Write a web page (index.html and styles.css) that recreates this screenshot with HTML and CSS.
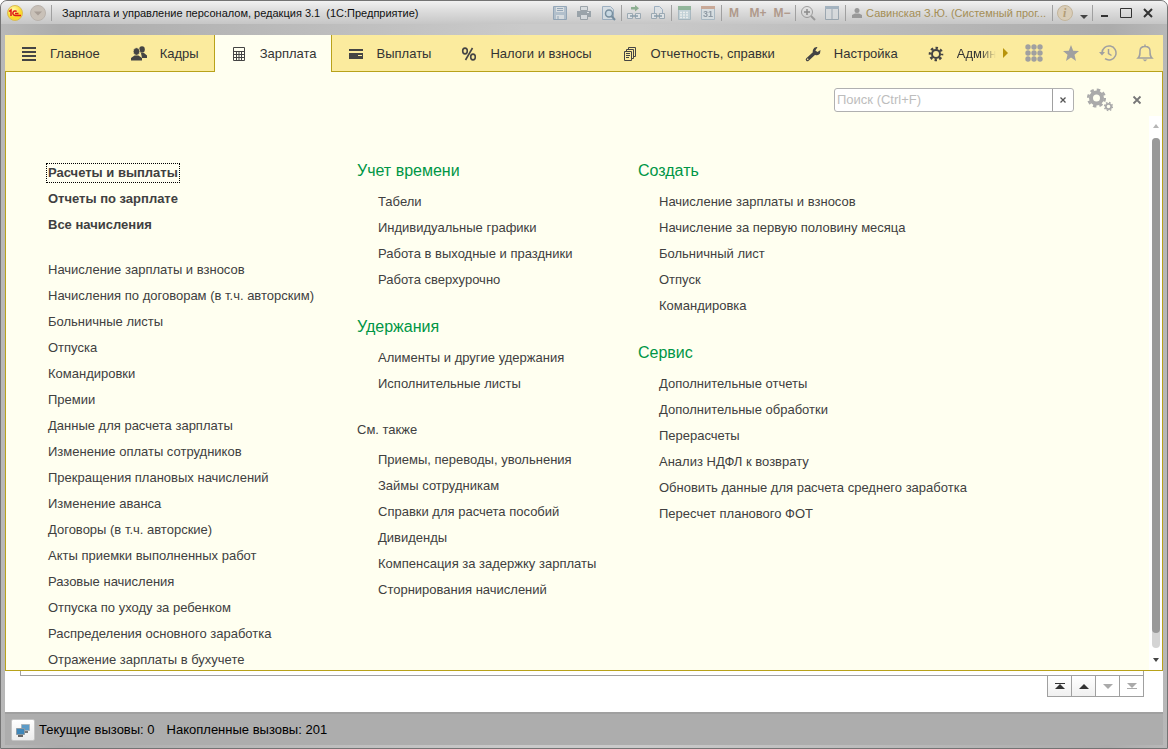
FILE: index.html
```html
<!DOCTYPE html>
<html lang="ru">
<head>
<meta charset="utf-8">
<title>Зарплата и управление персоналом</title>
<link rel="stylesheet" href="styles.css">
</head>
<body>
<div class="window">
  <header class="titlebar">
    <svg class="logo" viewBox="0 0 16 16"><defs><radialGradient id="g1" cx=".4" cy=".3"><stop offset="0" stop-color="#fffbb0"/><stop offset="1" stop-color="#fbd92a"/></radialGradient></defs><circle cx="8" cy="8" r="7.5" fill="url(#g1)" stroke="#d8ba58"/><path d="M2 6.5L4 5v6M9.700 6.500A2.300 2.300 0 1 0 8 10.500H14M8 8.500h3.500" fill="none" stroke="#e01818" stroke-width="1.500"/></svg>
    <button class="round" aria-label="Меню"><svg viewBox="0 0 16 16"><circle cx="8" cy="8" r="7.500" fill="#c9c1b8" stroke="#b9b2ac"/><path d="M4 6.500h8L8 10.500z" fill="#a89e96"/></svg></button>
    <i class="sep first"></i>
    <h1 class="title">Зарплата и управление персоналом, редакция 3.1&nbsp; (1С:Предприятие)</h1>
    <div class="tools">
      <button aria-label="Сохранить"><svg viewBox="0 0 16 16"><path d="M1.500 1.500h13v13h-13z" fill="#a9bac9" stroke="#8299ae"/><path d="M4 2h8v5H4zM4 10h8v4H4z" fill="#d8dee2"/><path d="M5 3.500h6M5 5.500h6M6 11v3" stroke="#8299ae"/></svg></button>
      <button aria-label="Печать"><svg viewBox="0 0 16 16"><path d="M4.500 1.500h7v4h-7z" fill="#d7dcdf" stroke="#8b959d"/><path d="M1 6h14v6H1z" fill="#8b979f"/><path d="M4.500 9.500h7v5h-7z" fill="#d7dcdf" stroke="#8b959d"/><path d="M11 7.500h2" stroke="#e0e5e8"/></svg></button>
      <button aria-label="Предварительный просмотр"><svg viewBox="0 0 16 16"><path d="M2.500 1.500h8l3 3v10h-11z" fill="#d3dde4" stroke="#8ca3b8"/><circle cx="9" cy="8.500" r="3.500" fill="#c4d8e5" stroke="#607d92" stroke-width="1.500"/><path d="M11.500 11l3.500 4" stroke="#607d92" stroke-width="2"/></svg></button>
      <i class="sep"></i>
      <button aria-label="Получить ссылку"><svg viewBox="0 0 16 16"><path d="M5 2h4V0l4 3.200L9 6.500V4.500H5z" fill="#78a27e"/><path d="M6.500 8.500h-5v5h5zM9.500 8.500h5v5h-5z" fill="#e0e5e9" stroke="#8e9fab"/><path d="M4 11h8" stroke="#7990a0" stroke-width="1.500"/></svg></button>
      <button aria-label="Перейти по ссылке"><svg viewBox="0 0 16 16"><path d="M4.500 8V1.500h5l3 3V8" fill="#dce1e5" stroke="#8ca3b8"/><path d="M6.500 8.500h-5v5h5zM9.500 8.500h5v5h-5z" fill="#e0e5e9" stroke="#8e9fab"/><path d="M4 11h8" stroke="#7990a0" stroke-width="1.500"/></svg></button>
      <i class="sep"></i>
      <button aria-label="Калькулятор"><svg viewBox="0 0 16 16"><path d="M2.500 1.500h12v13h-12z" fill="#bdd0d7" stroke="#9db0ba"/><path d="M2 1h13v4H2z" fill="#7eab89"/><path d="M4 7.500h9M4 10h9M4 12.500h9" stroke="#eef2f2" stroke-width="1.500" stroke-dasharray="2 1"/></svg></button>
      <button aria-label="Календарь"><svg viewBox="0 0 16 16"><path d="M1.500 1.500h13v13h-13z" fill="#d6dfe3" stroke="#9fb2bf"/><path d="M1 1h14v3H1z" fill="#c39b85"/><text x="3" y="12" class="day">31</text></svg></button>
      <i class="sep"></i>
      <button class="mem">M</button><button class="mem">M+</button><button class="mem">M−</button>
      <i class="sep"></i>
      <button aria-label="Масштаб"><svg viewBox="0 0 16 16" fill="none" stroke="#8c8c8c"><circle cx="7" cy="7" r="5.500"/><path d="M4 7h6M7 4v6" stroke="#777" stroke-width="1.500"/><path d="M11 11l4 4" stroke-width="2"/></svg></button>
      <button aria-label="Панели"><svg viewBox="0 0 16 16"><path d="M1.500 1.500h13v13h-13zM8 3v11" fill="#d6dadd" stroke="#8d9ba7"/><path d="M1 1h14v3H1z" fill="#94a7b7"/></svg></button>
      <i class="sep"></i>
    </div>
    <a class="user" href="#"><svg viewBox="0 0 12 12"><circle cx="6" cy="3.500" r="2.500" fill="#999"/><path d="M1 11V8l3-1.500h4L11 8v3z" fill="#999"/></svg><span>Савинская З.Ю. (Системный прог...</span></a>
    <i class="sep"></i>
    <div class="controls">
      <button aria-label="Справка"><svg viewBox="0 0 18 18"><circle cx="9" cy="9" r="7.500" fill="#d9cdb8" stroke="#c3b59b"/><text x="7" y="13" class="info">i</text></svg></button>
      <button class="drop" aria-label="Ещё"><svg viewBox="0 0 10 16"><path d="M1 10h8l-4 4z" fill="#444"/></svg></button>
      <i class="sep"></i>
      <button aria-label="Свернуть"><svg viewBox="0 0 16 16"><path d="M5 11h7" stroke="#333" stroke-width="2"/></svg></button>
      <button aria-label="Развернуть"><svg viewBox="0 0 16 16"><path d="M2.500 3.500h11v9h-11z" fill="none" stroke="#333"/></svg></button>
      <button aria-label="Закрыть"><svg viewBox="0 0 16 16"><path d="M4 4l8 8M12 4l-8 8" stroke="#333" stroke-width="2"/></svg></button>
    </div>
  </header>

  <nav class="nav">
    <div class="tabs">
      <a href="#"><svg viewBox="0 0 16 16"><path d="M1 2h14M1 6h14M1 10h14M1 14h14" stroke="#444" stroke-width="2"/></svg>Главное</a>
      <a href="#"><svg viewBox="0 0 16 16" fill="#444"><ellipse cx="11" cy="3.500" rx="2.800" ry="3.200"/><path d="M10 7h3l3 2.500V12h-5z"/><ellipse cx="5.500" cy="5.500" rx="3.300" ry="3.800" stroke="#fbeb9e" stroke-width=".7"/><path d="M0 14.500V12l3.500-2.500h4L11 12v2.500z"/></svg>Кадры</a>
      <a href="#" class="active" aria-current="page"><svg viewBox="0 0 16 16"><path d="M2.500 1.500h11v13h-11z" fill="#fffff0" stroke="#444"/><path d="M2 5.500h12M5.500 6v8M8 6v8M10.500 6v8M3 8.500h10M3 11.500h10" fill="none" stroke="#444"/></svg>Зарплата</a>
      <a href="#"><svg viewBox="0 0 16 16"><path d="M1 3h14v2H1zM1 7h14v6H1z" fill="#444"/><path d="M10 9.500h4" stroke="#fbeb9e"/></svg>Выплаты</a>
      <a href="#"><svg viewBox="0 0 16 16" fill="none" stroke="#444" stroke-width="1.600"><ellipse cx="4" cy="5" rx="2.300" ry="2.900"/><ellipse cx="12" cy="11" rx="2.300" ry="2.900"/><path d="M11.500 2L4.500 14"/></svg>Налоги и взносы</a>
      <a href="#"><svg viewBox="0 0 16 16" fill="none" stroke="#444"><path d="M2.500 5.500h7v9h-7zM4.500 5V3.500h7v9H10M6.500 3V1.500h7v9H12M4 7.500h4M4 9.500h4M4 11.500h3"/></svg>Отчетность, справки</a>
      <a href="#"><svg viewBox="0 0 16 16"><path d="M2.500 13.500L9 7.500" stroke="#444" stroke-width="3.500" stroke-linecap="round"/><path d="M12.500 1.200A4 4 0 1 0 15 7.500L15.500 4 12.500 6 10.300 4.500z" fill="#444"/><circle cx="2.700" cy="13.300" r=".8" fill="#fbeb9e"/></svg>Настройка</a>
      <a href="#" class="cut"><svg viewBox="0 0 16 16" fill="none" stroke="#444"><circle cx="8" cy="8" r="4" stroke-width="2"/><circle cx="8" cy="8" r="6" stroke-width="2.600" stroke-dasharray="2.400 2.312" stroke-dashoffset="1.200"/></svg><span>Админ</span></a>
    </div>
    <button class="more" aria-label="Дальше"><svg viewBox="0 0 6 10"><path d="M0 0l5 5-5 5z" fill="#b8940a"/></svg></button>
    <div class="quick">
      <button aria-label="Все функции"><svg viewBox="0 0 18 18" fill="#a0a0a0"><circle cx="3" cy="3" r="2.700"/><circle cx="9" cy="3" r="2.700"/><circle cx="15" cy="3" r="2.700"/><circle cx="3" cy="9" r="2.700"/><circle cx="9" cy="9" r="2.700"/><circle cx="15" cy="9" r="2.700"/><circle cx="3" cy="15" r="2.700"/><circle cx="9" cy="15" r="2.700"/><circle cx="15" cy="15" r="2.700"/></svg></button>
      <button aria-label="Избранное"><svg viewBox="0 0 18 18"><path d="M9 1l2.200 5.700 5.800.3-4.500 3.800L14 17l-5-3.400L4 17l1.500-6.200L1 7l5.800-.3z" fill="#a0a0a0"/></svg></button>
      <button aria-label="История"><svg viewBox="0 0 18 18" fill="none" stroke="#a0a0a0" stroke-width="1.500"><path d="M3 9a7 7 0 1 1 3 5.700M9.500 5v4.500l3 2"/><path d="M0 8h6l-3 3.500z" fill="#a0a0a0" stroke="none"/></svg></button>
      <button aria-label="Уведомления"><svg viewBox="0 0 18 18"><path d="M2 14c2-2 2-3 2-7 0-3 2-4.500 5-4.500S14 4 14 7c0 4 0 5 2 7zM9 .5v2" fill="none" stroke="#a0a0a0" stroke-width="1.500"/><path d="M6.500 15.500h5L9 17.500z" fill="#a0a0a0"/></svg></button>
    </div>
  </nav>

  <main class="panel">
    <div class="search-row">
      <form class="search"><input type="text" placeholder="Поиск (Ctrl+F)" aria-label="Поиск"><button type="button" aria-label="Очистить"><svg viewBox="0 0 8 8"><path d="M1.500 1.500l5 5M6.500 1.500l-5 5" stroke="#555" stroke-width="1.300"/></svg></button></form>
      <button class="gears" aria-label="Настройки"><svg viewBox="0 0 26 24" fill="none" stroke="#aaa"><circle cx="9.500" cy="10" r="5.500" stroke-width="4"/><circle cx="9.500" cy="10" r="8.300" stroke-width="2.500" stroke-dasharray="3.500 3.019"/><circle cx="21.500" cy="18.500" r="2.700" stroke-width="1.800"/><circle cx="21.500" cy="18.500" r="4" stroke-width="1.400" stroke-dasharray="1.600 1.542"/></svg></button>
      <button class="close" aria-label="Закрыть панель"><svg viewBox="0 0 10 10"><path d="M1.500 1.500l7 7M8.500 1.500l-7 7" stroke="#777" stroke-width="1.800"/></svg></button>
    </div>
    <div class="panel-body">
      <div class="columns">
        <section class="col-main">
          <ul class="strong">
            <li><a href="#" class="focused">Расчеты и выплаты</a></li>
            <li><a href="#">Отчеты по зарплате</a></li>
            <li><a href="#">Все начисления</a></li>
          </ul>
          <ul>
            <li><a href="#">Начисление зарплаты и взносов</a></li>
            <li><a href="#">Начисления по договорам (в т.ч. авторским)</a></li>
            <li><a href="#">Больничные листы</a></li>
            <li><a href="#">Отпуска</a></li>
            <li><a href="#">Командировки</a></li>
            <li><a href="#">Премии</a></li>
            <li><a href="#">Данные для расчета зарплаты</a></li>
            <li><a href="#">Изменение оплаты сотрудников</a></li>
            <li><a href="#">Прекращения плановых начислений</a></li>
            <li><a href="#">Изменение аванса</a></li>
            <li><a href="#">Договоры (в т.ч. авторские)</a></li>
            <li><a href="#">Акты приемки выполненных работ</a></li>
            <li><a href="#">Разовые начисления</a></li>
            <li><a href="#">Отпуска по уходу за ребенком</a></li>
            <li><a href="#">Распределения основного заработка</a></li>
            <li><a href="#">Отражение зарплаты в бухучете</a></li>
          </ul>
        </section>
        <section class="col-mid">
          <h2>Учет времени</h2>
          <ul>
            <li><a href="#">Табели</a></li>
            <li><a href="#">Индивидуальные графики</a></li>
            <li><a href="#">Работа в выходные и праздники</a></li>
            <li><a href="#">Работа сверхурочно</a></li>
          </ul>
          <h2>Удержания</h2>
          <ul>
            <li><a href="#">Алименты и другие удержания</a></li>
            <li><a href="#">Исполнительные листы</a></li>
          </ul>
          <h2 class="also">См. также</h2>
          <ul>
            <li><a href="#">Приемы, переводы, увольнения</a></li>
            <li><a href="#">Займы сотрудникам</a></li>
            <li><a href="#">Справки для расчета пособий</a></li>
            <li><a href="#">Дивиденды</a></li>
            <li><a href="#">Компенсация за задержку зарплаты</a></li>
            <li><a href="#">Сторнирования начислений</a></li>
          </ul>
        </section>
        <section class="col-last">
          <h2>Создать</h2>
          <ul>
            <li><a href="#">Начисление зарплаты и взносов</a></li>
            <li><a href="#">Начисление за первую половину месяца</a></li>
            <li><a href="#">Больничный лист</a></li>
            <li><a href="#">Отпуск</a></li>
            <li><a href="#">Командировка</a></li>
          </ul>
          <h2>Сервис</h2>
          <ul>
            <li><a href="#">Дополнительные отчеты</a></li>
            <li><a href="#">Дополнительные обработки</a></li>
            <li><a href="#">Перерасчеты</a></li>
            <li><a href="#">Анализ НДФЛ к возврату</a></li>
            <li><a href="#">Обновить данные для расчета среднего заработка</a></li>
            <li><a href="#">Пересчет планового ФОТ</a></li>
          </ul>
        </section>
      </div>
      <div class="scroll">
        <svg viewBox="0 0 6 4"><path d="M0 4h6L3 0z" fill="#b5b5b5"/></svg>
        <div class="track"><div class="thumb"></div></div>
        <svg viewBox="0 0 6 4"><path d="M0 0h6L3 4z" fill="#444"/></svg>
      </div>
    </div>
  </main>

  <div class="under">
    <div class="frame"></div>
    <div class="pager">
      <button aria-label="В начало"><svg viewBox="0 0 10 8"><path d="M0 1.500h10" stroke="#333"/><path d="M0 7h10L5 2z" fill="#333"/></svg></button>
      <button aria-label="Вверх"><svg viewBox="0 0 10 8"><path d="M0 7h10L5 2z" fill="#333"/></svg></button>
      <button aria-label="Вниз" disabled><svg viewBox="0 0 10 8"><path d="M0 2h10L5 7z" fill="#aaa"/></svg></button>
      <button aria-label="В конец" disabled><svg viewBox="0 0 10 8"><path d="M0 1h10L5 6z" fill="#aaa"/><path d="M0 6.500h10" stroke="#aaa"/></svg></button>
    </div>
  </div>

  <footer class="status">
    <button aria-label="Вызовы сервера"><svg viewBox="0 0 16 16"><path d="M6.500 2.500h8v6h-8z" fill="#5b9bc8" stroke="#a9b5bd"/><path d="M9 10h4" stroke="#777" stroke-width="2"/><path d="M1.500 6.500h8v6h-8z" fill="#3f87ba" stroke="#8d9ba5"/><path d="M3 14h5" stroke="#666" stroke-width="2"/></svg></button>
    <span>Текущие вызовы: 0</span><span>Накопленные вызовы: 201</span>
  </footer>
</div>
</body>
</html>
```
FILE: styles.css
```css
* { box-sizing: border-box; }
html, body { height: 100%; margin: 0; }
body { background: #fff; color: #404040; font: 13px/16px "Liberation Sans", Arial, sans-serif; }
a { color: inherit; text-decoration: none; }
button { margin: 0; padding: 0; border: 0; background: none; font: inherit; color: inherit; display: flex; align-items: center; justify-content: center; }
ul { list-style: none; margin: 0; padding: 0; }
svg { display: block; flex: none; }

.window {
  height: 100%; display: flex; flex-direction: column; padding: 0 4px 3px; overflow: hidden;
  border: 1px solid #747474; border-radius: 7px 7px 0 0;
  background: linear-gradient(90deg, #b8b8b8, #acacac 5%, #cacaca 45%, #cacaca 55%, #acacac 95%, #b8b8b8);
}

.titlebar { display: flex; align-items: center; height: 23px; margin: 0 -4px 11px; padding: 1px 8px 0 6px; background: linear-gradient(#f2f2f2, #dedede 40%, #c6c6c6); }
.titlebar svg { width: 16px; height: 16px; }
.round { margin-left: 7px; }
.sep { width: 1px; height: 16px; margin-left: 1px; flex: none; background: #a0a0a0; }
.sep.first { margin: 0 10px 0 5px; }
.title { margin: 0; flex: 1; min-width: 0; overflow: hidden; white-space: nowrap; font-size: 11px; font-weight: 400; color: #111; }
.tools { display: flex; align-items: center; }
.tools button { width: 24px; height: 20px; }
.tools svg { opacity: .8; }
.day { font: bold 9px "Liberation Sans", sans-serif; fill: #7d8b98; }
.tools .mem { font-size: 12px; font-weight: 700; color: #b09a8c; }
.user { display: flex; align-items: center; gap: 3px; padding: 0 5px; font-size: 11px; color: #a48e55; white-space: nowrap; }
.user svg { width: 12px; height: 12px; }
.controls { display: flex; align-items: center; }
.controls button { width: 22px; height: 20px; }
.controls .drop { width: 14px; }
.controls .drop svg { width: 10px; }
.controls button:first-child { width: 24px; }
.controls button:first-child svg { width: 18px; height: 18px; }
.info { font: italic bold 12px "Liberation Serif", serif; fill: #b39d77; }

.nav { display: flex; align-items: stretch; height: 37px; flex: none; background: #fbeb9e; border-bottom: 1px solid #b8a21a; color: #333; }
.tabs { display: flex; flex: 1; min-width: 0; overflow: hidden; margin-bottom: -1px; }
.tabs a { display: flex; align-items: center; gap: 13px; flex: none; padding: 1px 15px 0 16px; white-space: nowrap; border-bottom: 1px solid #b8a21a; }
.tabs svg { width: 16px; height: 16px; }
.tabs .active { padding-top: 0; background: #fffff0; border: 1px solid #b8a21a; border-width: 0 1px; }
.tabs .active, .tabs .active ~ a { padding-right: 14px; }
.tabs .active ~ .cut { flex: 1; padding-right: 0; }
.cut span { -webkit-mask-image: linear-gradient(90deg, #000 60%, transparent); mask-image: linear-gradient(90deg, #000 60%, transparent); }
.more { width: 16px; padding-left: 4px; justify-content: flex-start; }
.more svg { width: 6px; height: 10px; }
.quick { display: flex; }
.quick button { width: 37px; }
.quick svg { width: 18px; height: 18px; }

.panel { flex: 1; min-height: 0; display: flex; flex-direction: column; background: #fffff0; border: 1px solid #b8a21a; border-top: 0; }
.search-row { display: flex; justify-content: flex-end; align-items: center; height: 44px; padding: 12px 20px 0 0; flex: none; }
.search { display: flex; width: 240px; height: 24px; border: 1px solid #b0b0b0; border-radius: 3px; background: #fff; overflow: hidden; }
.search input { flex: 1; min-width: 0; border: 0; padding: 0 2px; outline: 0; background: transparent; font: inherit; color: #333; }
.search input::placeholder { color: #bdbdbd; opacity: 1; }
.search button { width: 21px; border-left: 1px solid #a0a0a0; }
.search button svg { width: 8px; height: 8px; }
.gears { margin: 0 19px 0 13px; }
.gears svg { width: 26px; height: 24px; }
.close svg { width: 10px; height: 10px; }

.panel-body { flex: 1; min-height: 0; display: flex; }
.columns { flex: 1; min-width: 0; display: grid; grid-template-columns: 309px 281px 1fr; padding: 43px 0 0 42px; overflow: hidden; }
.columns li { height: 26px; display: flex; align-items: center; white-space: nowrap; }
.col-main { padding-top: 1px; }
.col-main .strong { font-weight: 700; margin-bottom: 19px; }
.focused { outline: 1px dotted #000; outline-offset: 1px; }
.col-mid ul, .col-last ul { padding-left: 21px; margin-bottom: 22px; }
h2 { margin: 0; height: 30px; line-height: 24px; font-size: 16px; font-weight: 400; color: #009646; }
.also { margin-top: -2px; font-size: 13px; line-height: 26px; color: #404040; }
.scroll { display: flex; flex-direction: column; align-items: center; width: 13px; padding: 8px 0; background: #fff; }
.scroll svg { width: 6px; height: 4px; }
.track { flex: 1; width: 8px; margin: 10px 0; border-radius: 4px; background: #d4d4d4; }
.thumb { height: 97%; border-radius: 4px; background: #999; }

.under { flex: none; height: 41px; background: #fff; padding: 0 19px 0 15px; }
.frame { height: 5px; border: 1px solid #a0a0a0; border-top: 0; }
.pager { display: flex; justify-content: flex-end; margin-top: -1px; }
.pager button { width: 25px; height: 22px; margin-left: -1px; border: 1px solid #a0a0a0; background: linear-gradient(#fff, #f0f0f0); }
.pager button:disabled { background: #fff; }
.pager svg { width: 10px; height: 8px; }

.status { display: flex; align-items: center; gap: 12px; height: 33px; flex: none; padding-left: 6px; background: #adadad; border-top: 2px solid #a0a0a0; color: #000; }
.status button { width: 24px; height: 22px; margin-right: -8px; border: 1px solid #c4c4c4; border-radius: 2px; background: linear-gradient(#fff, #ececec); }
.status svg { width: 16px; height: 16px; }
```
